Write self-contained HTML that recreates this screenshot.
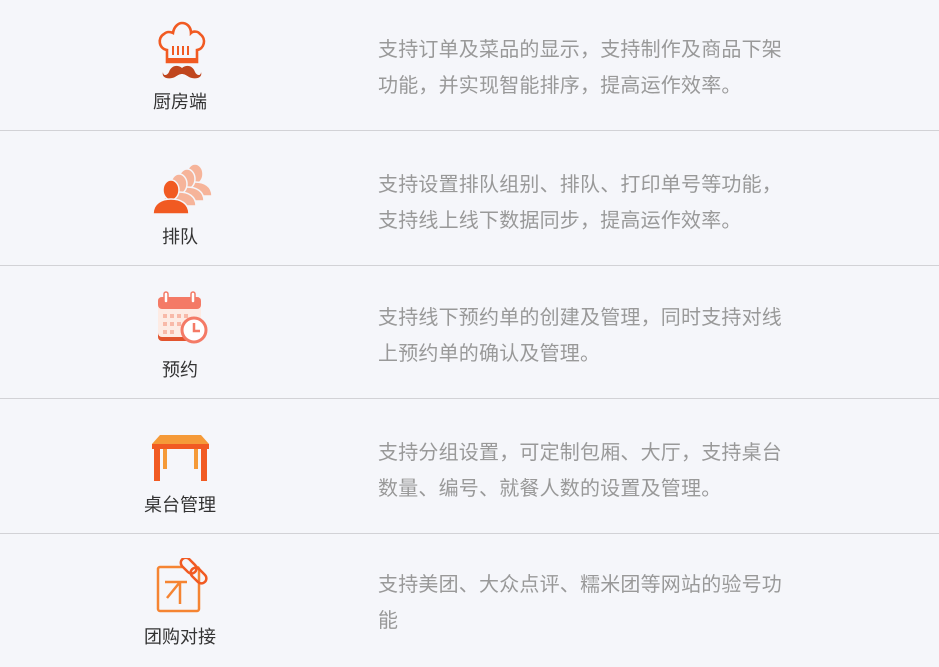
<!DOCTYPE html>
<html><head><meta charset="utf-8"><style>
body{margin:0;width:939px;height:667px;background:#f5f6fa;position:relative;overflow:hidden;font-family:"Liberation Sans","Noto Sans CJK SC",sans-serif}
.hr{position:absolute;left:0;width:939px;height:1px;background:#d2d2d6}
.lb{position:absolute;width:360px;left:0;text-align:center;font-size:18px;color:#333;line-height:20px}
.tx{position:absolute;left:378px;width:440px;font-size:20px;color:#999;line-height:36px;letter-spacing:0.2px}
svg{position:absolute}
</style></head><body>
<div class="hr" style="top:130px"></div>
<div class="hr" style="top:265px"></div>
<div class="hr" style="top:398px"></div>
<div class="hr" style="top:533px"></div>

<svg style="left:155px;top:20px" width="54" height="62" viewBox="0 0 54 62">
<path d="M12 42 V30 C4 29 2 18 9 14 C12 11 16 12 18 13 C19 6 24 3 27 3 C31 3 36 6 36 13 C38 11 43 11 45 14 C52 19 49 29 42 30 V42 Z" fill="none" stroke="#f15a22" stroke-width="2.6"/>
<rect x="12" y="38" width="30" height="5" fill="#f15a22"/>
<path d="M18 26v9M23 26v9M28 26v9M33 26v9" stroke="#f15a22" stroke-width="2"/>
<path d="M27 48 C22 44 16 46 14 52 C12 56 8 56 8 52 C6 58 14 60 20 57 C23 55 25 54 27 54 C29 54 31 55 34 57 C40 60 48 58 46 52 C46 56 42 56 40 52 C38 46 32 44 27 48Z" fill="#c0461e"/>
</svg>
<div class="lb" style="top:92px">厨房端</div>

<svg style="left:152px;top:158px" width="62" height="58" viewBox="0 0 62 58">
<g fill="#f6b49a" stroke="#f5f6fa" stroke-width="1.5">
<g transform="translate(24 -14)"><ellipse cx="19" cy="30" rx="8" ry="10"/><path d="M2 52 C2 42 10 38 19 38 C28 38 36 42 36 52Z"/></g>
<g transform="translate(16 -9)"><ellipse cx="19" cy="30" rx="8" ry="10"/><path d="M2 52 C2 42 10 38 19 38 C28 38 36 42 36 52Z"/></g>
<g transform="translate(8 -4)"><ellipse cx="19" cy="30" rx="8" ry="10"/><path d="M2 52 C2 42 10 38 19 38 C28 38 36 42 36 52Z"/></g>
</g>
<g fill="#f15a22" stroke="#f5f6fa" stroke-width="1.5"><ellipse cx="19" cy="32" rx="8" ry="10"/>
<path d="M1 56 C1 45 10 41 19 41 C28 41 37 45 37 56Z"/></g>
</svg>
<div class="lb" style="top:227px">排队</div>

<svg style="left:157px;top:291px" width="52" height="54" viewBox="0 0 52 54">
<rect x="1" y="6" width="43" height="44" rx="4" fill="#e2542e"/>
<rect x="1" y="6" width="43" height="40" rx="4" fill="#fdebe4"/>
<rect x="1" y="6" width="43" height="12" rx="4" fill="#f47a66"/>
<rect x="7" y="1" width="4" height="11" rx="2" fill="#fff" stroke="#f47a66" stroke-width="1.5"/>
<rect x="34" y="1" width="4" height="11" rx="2" fill="#fff" stroke="#f47a66" stroke-width="1.5"/>
<g fill="#f8b9a8"><rect x="6" y="23" width="4" height="4"/><rect x="13" y="23" width="4" height="4"/><rect x="20" y="23" width="4" height="4"/><rect x="27" y="23" width="4" height="4"/><rect x="6" y="31" width="4" height="4"/><rect x="13" y="31" width="4" height="4"/><rect x="20" y="31" width="4" height="4"/><rect x="6" y="39" width="4" height="4"/><rect x="13" y="39" width="4" height="4"/></g>
<circle cx="37" cy="39" r="12" fill="#fff" stroke="#f47a66" stroke-width="3"/>
<path d="M37 32v8h6" fill="none" stroke="#f47a66" stroke-width="2.5"/>
</svg>
<div class="lb" style="top:360px">预约</div>

<svg style="left:151px;top:434px" width="59" height="48" viewBox="0 0 59 48">
<path d="M9 1 H50 L58 10 H1 Z" fill="#f59a38"/>
<rect x="1" y="10" width="57" height="5" fill="#f15a22"/>
<rect x="3" y="15" width="6" height="32" fill="#f15a22"/>
<rect x="50" y="15" width="6" height="32" fill="#f15a22"/>
<rect x="12" y="15" width="4" height="20" fill="#f59a38"/>
<rect x="43" y="15" width="4" height="20" fill="#f59a38"/>
</svg>
<div class="lb" style="top:495px">桌台管理</div>

<svg style="left:155px;top:558px" width="58" height="56" viewBox="0 0 58 56">
<rect x="3" y="9" width="41" height="44" rx="2" fill="none" stroke="#f58432" stroke-width="2.5"/>
<path d="M10 24 H32 M25 24 L12 40 M25 24 V46" stroke="#f58432" stroke-width="2.5" fill="none"/>
<g transform="rotate(45 40 14)"><rect x="22" y="9" width="18" height="10" rx="5" fill="#f5f6fa" stroke="#f15a22" stroke-width="2.5"/><rect x="36" y="9" width="18" height="10" rx="5" fill="none" stroke="#f15a22" stroke-width="2.5"/></g>
</svg>
<div class="lb" style="top:627px">团购对接</div>

<div class="tx" style="top:32px">支持订单及菜品的显示，支持制作及商品下架<br>功能，并实现智能排序，提高运作效率。</div>
<div class="tx" style="top:167px">支持设置排队组别、排队、打印单号等功能，<br>支持线上线下数据同步，提高运作效率。</div>
<div class="tx" style="top:300px">支持线下预约单的创建及管理，同时支持对线<br>上预约单的确认及管理。</div>
<div class="tx" style="top:435px">支持分组设置，可定制包厢、大厅，支持桌台<br>数量、编号、就餐人数的设置及管理。</div>
<div class="tx" style="top:567px">支持美团、大众点评、糯米团等网站的验号功<br>能</div>
</body></html>
